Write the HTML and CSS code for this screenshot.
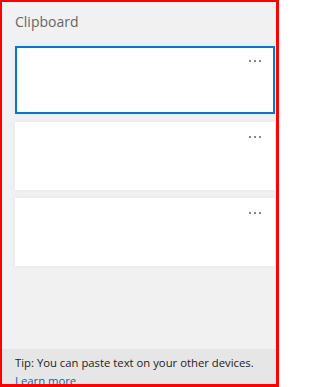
FILE: index.html
```html
<!DOCTYPE html>
<html lang="en">
<head>
<meta charset="utf-8">
<title>Clipboard</title>
<link rel="stylesheet" href="styles.css">
</head>
<body>
<div class="panel">
  <main class="main">
    <h1 class="title">Clipboard</h1>
    <ul class="list">
      <li class="card card-selected">
        <svg class="more" width="12" height="2" viewBox="0 0 12 2"><rect x="0" y="0" width="2" height="2"/><rect x="5" y="0" width="2" height="2"/><rect x="10" y="0" width="2" height="2"/></svg>
      </li>
      <li class="card">
        <svg class="more" width="12" height="2" viewBox="0 0 12 2"><rect x="0" y="0" width="2" height="2"/><rect x="5" y="0" width="2" height="2"/><rect x="10" y="0" width="2" height="2"/></svg>
      </li>
      <li class="card">
        <svg class="more" width="12" height="2" viewBox="0 0 12 2"><rect x="0" y="0" width="2" height="2"/><rect x="5" y="0" width="2" height="2"/><rect x="10" y="0" width="2" height="2"/></svg>
      </li>
    </ul>
  </main>
  <footer class="tip">
    <p class="tip-text">Tip: You can paste text on your other devices.</p>
    <a class="tip-link" href="#">Learn more</a>
  </footer>
</div>
</body>
</html>
```

FILE: styles.css
```css
* { box-sizing: border-box; }
html, body { margin: 0; padding: 0; height: 100%; }
body {
  font-family: "Open Sans", "Noto Sans", sans-serif;
  background: #ffffff;
}
.panel {
  width: 279px;
  height: 387px;
  border-style: solid;
  border-color: #ff0000;
  border-width: 2px 3px 3px 2px;
  display: flex;
  flex-direction: column;
  overflow: hidden;
  background: #f1f1f1;
}
.main {
  flex: 1;
  padding: 10px 1px 0 13px;
}
.title {
  margin: 0 0 14px 0;
  font-size: 14px;
  line-height: 20px;
  font-weight: 400;
  color: #666666;
}
.list {
  list-style: none;
  margin: 0;
  padding: 0;
  display: flex;
  flex-direction: column;
  gap: 8px;
}
.card {
  height: 68px;
  background: #ffffff;
  border: 2px solid transparent;
  display: flex;
  justify-content: flex-end;
  align-items: flex-start;
  padding: 12px 12px 0 0;
  box-shadow: 0 0 4px rgba(0, 0, 0, 0.05);
}
.card-selected {
  border-color: #0078d7;
}
.more {
  display: block;
  fill: #8a8a8a;
}
.tip {
  height: 35px;
  flex: none;
  background: #e6e6e6;
  padding: 5px 0 0 13px;
  font-size: 11.3px;
  line-height: 18px;
}
.tip-text {
  margin: 0;
  color: #222222;
  white-space: nowrap;
}
.tip-link {
  display: block;
  color: #0067c0;
  text-decoration: none;
}
```
